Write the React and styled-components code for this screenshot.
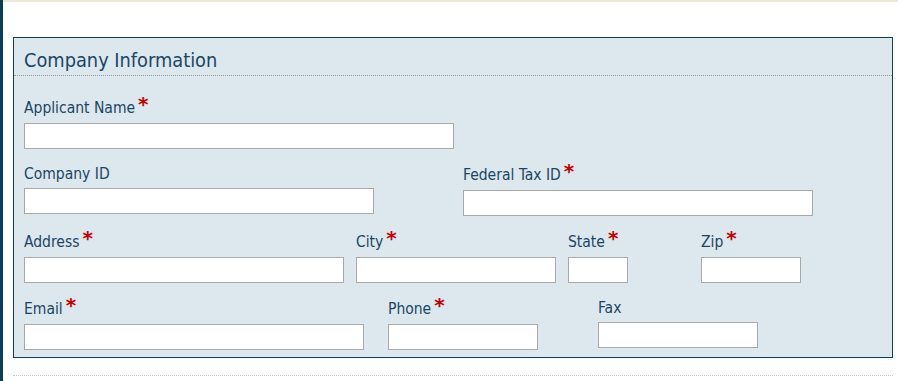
import React from 'react';
import styled, {createGlobalStyle} from 'styled-components';

const GlobalStyle = createGlobalStyle`
  html, body {
    margin: 0;
    padding: 0;
    background: #fff;
  }
  body {
    font-family: "DejaVu Sans Condensed", "DejaVu Sans", sans-serif;
  }
`;

const Page = styled.div`
  display: flex;
  min-height: 381px;
`;

const SideBar = styled.div`
  width: 3px;
  background: #0b3d5c;
  flex-shrink: 0;
`;

const Main = styled.div`
  flex: 1;
`;

const TopStrip = styled.div`
  height: 2px;
  margin-right: 5px;
  background: #efe7d6;
`;

const Content = styled.div`
  padding: 35px 7px 0 10px;
`;

const Panel = styled.fieldset`
  margin: 0;
  padding: 0;
  width: 880px;
  box-sizing: border-box;
  border: 1px solid #0d3f5e;
  background: #dde7ee;
`;

const PanelTitle = styled.div`
  height: 38px;
  box-sizing: border-box;
  padding: 11px 0 0 10px;
  border-bottom: 1px dotted #8f9aa2;
  font-size: 19.8px;
  line-height: 24px;
  color: #1a4664;
`;

const PanelBody = styled.div`
  padding: 21px 10px 7px 10px;
  display: flex;
  flex-direction: column;
  gap: 15px;
`;

const Row = styled.div`
  display: flex;
  align-items: flex-start;
`;

const Field = styled.div`
  width: ${p => p.$col}px;
  flex-shrink: 0;
  display: flex;
  flex-direction: column;
`;

const Label = styled.label`
  height: ${p => (p.$required ? 26 : 24)}px;
  font-size: 15.5px;
  line-height: 20px;
  color: #1a4664;
  white-space: nowrap;
  padding-top: ${p => (p.$required ? 1 : 0)}px;
  box-sizing: border-box;
`;

const Star = styled.span`
  color: #c40000;
  font-family: "DejaVu Sans", sans-serif;
  font-weight: bold;
  font-size: 20px;
  line-height: 0;
  margin-left: 3px;
  position: relative;
  top: -2px;
`;

const Input = styled.input`
  display: block;
  width: ${p => p.$w}px;
  height: 26px;
  box-sizing: border-box;
  margin: 0;
  padding: 2px 4px;
  border: 1px solid #a9a9a9;
  border-radius: 0;
  background: #fff;
  font: inherit;
  font-size: 14px;
  outline: none;
`;

const BottomRule = styled.div`
  margin-top: 17px;
  width: 880px;
  border-top: 1px dotted #c8c8c8;
`;

const rows = [
  [{label: 'Applicant Name', required: true, col: 430, w: 430}],
  [
    {label: 'Company ID', col: 439, w: 350},
    {label: 'Federal Tax ID', required: true, col: 350, w: 350}
  ],
  [
    {label: 'Address', required: true, col: 332, w: 320},
    {label: 'City', required: true, col: 212, w: 200},
    {label: 'State', required: true, col: 133, w: 60},
    {label: 'Zip', required: true, col: 100, w: 100}
  ],
  [
    {label: 'Email', required: true, col: 364, w: 340},
    {label: 'Phone', required: true, col: 210, w: 150},
    {label: 'Fax', col: 160, w: 160}
  ]
];

export default function App() {
  return (
    <Page>
      <GlobalStyle />
      <SideBar />
      <Main>
        <TopStrip />
        <Content>
          <Panel>
            <PanelTitle>Company Information</PanelTitle>
            <PanelBody>
              {rows.map((row, i) => (
                <Row key={i}>
                  {row.map(f => (
                    <Field key={f.label} $col={f.col}>
                      <Label $required={f.required}>
                        {f.label}
                        {f.required && <Star>*</Star>}
                      </Label>
                      <Input type="text" $w={f.w} />
                    </Field>
                  ))}
                </Row>
              ))}
            </PanelBody>
          </Panel>
          <BottomRule />
        </Content>
      </Main>
    </Page>
  );
}
